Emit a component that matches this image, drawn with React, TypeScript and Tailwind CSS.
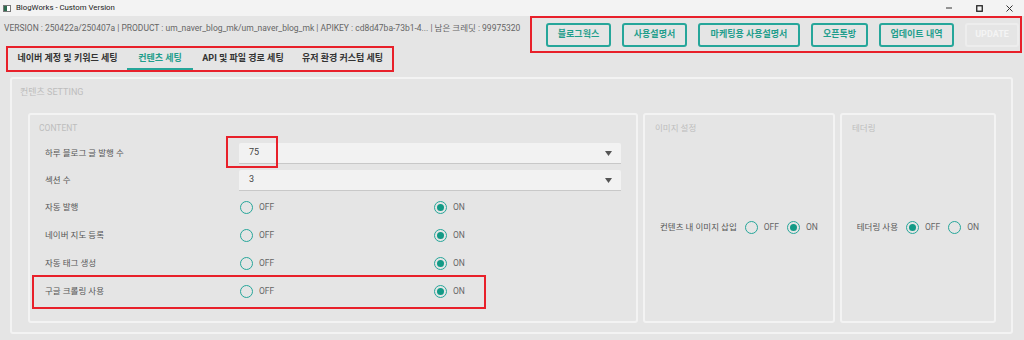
import React from "react";

const FONT = "font-[Roboto,'Noto_Sans_CJK_KR',sans-serif]";

/* ── Top-right action buttons ── */
const actionButtons = [
  { label: "블로그웍스", w: "w-[65px]" },
  { label: "사용설명서", w: "w-[65px]" },
  { label: "마케팅용 사용설명서", w: "w-[102px]" },
  { label: "오픈톡방", w: "w-[57px]" },
  { label: "업데이트 내역", w: "w-[75px]" },
];

const tabs = [
  { label: "네이버 계정 및 키워드 세팅", w: "w-[119px]", active: false },
  { label: "컨텐츠 세팅", w: "w-[66px]", active: true },
  { label: "API 및 파일 경로 세팅", w: "w-[100px]", active: false },
  { label: "유저 환경 커스텀 세팅", w: "w-[99px]", active: false },
];

const toggleRows = ["자동 발행", "네이버 지도 등록", "자동 태그 생성", "구글 크롤링 사용"];

function Radio({ checked }: { checked?: boolean }) {
  return (
    <span className="flex h-[13px] w-[13px] shrink-0 items-center justify-center rounded-full border-[1.5px] border-[#26a69a]">
      {checked && <span className="h-[7px] w-[7px] rounded-full bg-[#139a86]" />}
    </span>
  );
}

function RadioOption({ label, checked }: { label: string; checked?: boolean }) {
  return (
    <span className="flex items-center gap-[6px]">
      <Radio checked={checked} />
      <span className="text-[8.5px] text-[#666]">{label}</span>
    </span>
  );
}

function SelectBox({ value }: { value: string }) {
  return (
    <div className="flex h-[21px] w-[382px] items-center justify-between rounded-t-[2px] border-b border-[#c8c8c8] bg-[#f2f2f2] pl-[10px] pr-[9px]">
      <span className="text-[9px] text-[#444]">{value}</span>
      <svg width="7" height="5" viewBox="0 0 7 5">
        <path d="M0 0 H7 L3.5 5 Z" fill="#555" />
      </svg>
    </div>
  );
}

export default function App() {
  return (
    <div className={`h-[340px] w-[1024px] overflow-hidden bg-[#e5e5e5] ${FONT}`}>
      {/* ── Window title bar ── */}
      <div className="flex h-[16px] items-center bg-[#f3f3f3]">
        <svg className="ml-[3px]" width="8" height="7" viewBox="0 0 8 7">
          <rect x="0.5" y="0.5" width="7" height="6" fill="#fff" stroke="#777" />
          <rect x="1" y="1" width="3" height="5" fill="#2e6b4f" />
        </svg>
        <span className="ml-[5px] text-[7.8px] text-[#222]">BlogWorks - Custom Version</span>
        <div className="ml-auto flex items-center">
          <svg className="mr-[24px]" width="6" height="2" viewBox="0 0 6 2">
            <path d="M0 1 H6" stroke="#333" strokeWidth="1" />
          </svg>
          <svg className="mr-[23px]" width="7" height="7" viewBox="0 0 7 7">
            <rect x="0.75" y="0.75" width="5.5" height="5.5" fill="none" stroke="#222" strokeWidth="1.3" />
          </svg>
          <svg className="mr-[11px]" width="7" height="7" viewBox="0 0 7 7">
            <path d="M0.5 0.5 L6.5 6.5 M6.5 0.5 L0.5 6.5" stroke="#333" strokeWidth="1" />
          </svg>
        </div>
      </div>

      {/* ── Header: version info + tabs / action buttons ── */}
      <div className="flex h-[61px]">
        <div className="flex min-w-0 flex-1 flex-col pl-[4px]">
          <div className="mt-[4px] h-[16px] text-[8.5px] leading-[16px] whitespace-nowrap text-[#666]">
            VERSION : 250422a/250407a | PRODUCT : um_naver_blog_mk/um_naver_blog_mk | APIKEY : cd8d47ba-73b1-4... | 남은 크레딧 : 99975320
          </div>
          <div className="ml-[2px] mt-[10px] flex h-[26px] w-[388px] border-2 border-[#e8202a]">
            {tabs.map((t) => (
              <div
                key={t.label}
                className={`${t.w} flex h-full items-center justify-center text-[9px] font-bold ${
                  t.active ? "border-b-2 border-[#26a69a] pt-[2px] text-[#1f9e8c]" : "text-[#333]"
                }`}
              >
                {t.label}
              </div>
            ))}
          </div>
        </div>

        <div className="mr-[2px] flex h-[37px] w-[492px] shrink-0 items-center gap-[11px] border-2 border-[#e8202a] pl-[14px]">
          {actionButtons.map((b) => (
            <button
              key={b.label}
              className={`${b.w} h-[24px] rounded-[3px] border-2 border-[#26a69a] text-[9px] font-bold text-[#1f9e8c]`}
            >
              {b.label}
            </button>
          ))}
          <button className="h-[24px] w-[54px] rounded-[3px] border-2 border-[#ededed] text-[9px] font-bold text-[#f4f4f4]">
            UPDATE
          </button>
        </div>
      </div>

      {/* ── 컨텐츠 SETTING panel ── */}
      <div className="ml-[10px] flex h-[257px] w-[1003px] flex-col rounded-[3px] border-2 border-[#f3f3f3] pl-[16px]">
        <div className="mt-[6px] -ml-[8px] h-[14px] text-[9px] leading-[14px] text-[#bdbdbd]">컨텐츠 SETTING</div>

        <div className="mt-[14px] flex gap-[5px]">
          {/* CONTENT */}
          <div className="relative flex h-[210px] w-[610px] flex-col rounded-[3px] border-2 border-[#f3f3f3] pl-[9px] pt-[5px]">
            <div className="h-[16px] text-[8.5px] leading-[16px] text-[#bdbdbd]">CONTENT</div>

            <div className="mt-[7px] grid h-[21px] grid-cols-[200px_382px] items-center">
              <span className="pl-[6px] text-[8.5px] text-[#555]">하루 블로그 글 발행 수</span>
              <SelectBox value="75" />
            </div>
            <div className="mt-[6px] grid h-[21px] grid-cols-[200px_382px] items-center">
              <span className="pl-[6px] text-[8.5px] text-[#555]">섹션 수</span>
              <SelectBox value="3" />
            </div>

            <div className="mt-[2px] flex flex-col">
              {toggleRows.map((r) => (
                <div key={r} className="grid h-[28px] grid-cols-[201px_194px_100px] items-center">
                  <span className="pl-[6px] text-[8.5px] text-[#555]">{r}</span>
                  <RadioOption label="OFF" />
                  <RadioOption label="ON" checked />
                </div>
              ))}
            </div>

            {/* annotation boxes */}
            <div className="absolute left-[196px] top-[21px] h-[32px] w-[52px] border-2 border-[#e8202a]" />
            <div className="absolute left-[2px] top-[160px] h-[34px] w-[454px] border-2 border-[#e8202a]" />
          </div>

          {/* 이미지 설정 */}
          <div className="flex h-[210px] w-[192px] flex-col rounded-[3px] border-2 border-[#f3f3f3] pt-[5px]">
            <div className="h-[16px] pl-[10px] text-[8.5px] leading-[16px] text-[#bdbdbd]">이미지 설정</div>
            <div className="flex flex-1 items-center justify-center gap-[8px] pb-[2px]">
              <span className="text-[8.5px] text-[#555]">컨텐츠 내 이미지 삽입</span>
              <RadioOption label="OFF" />
              <RadioOption label="ON" checked />
            </div>
          </div>

          {/* 테더링 */}
          <div className="flex h-[210px] w-[156px] flex-col rounded-[3px] border-2 border-[#f3f3f3] pt-[5px]">
            <div className="h-[16px] pl-[10px] text-[8.5px] leading-[16px] text-[#bdbdbd]">테더링</div>
            <div className="flex flex-1 items-center justify-center gap-[8px] pb-[2px]">
              <span className="text-[8.5px] text-[#555]">테더링 사용</span>
              <RadioOption label="OFF" checked />
              <RadioOption label="ON" />
            </div>
          </div>
        </div>
      </div>
    </div>
  );
}
